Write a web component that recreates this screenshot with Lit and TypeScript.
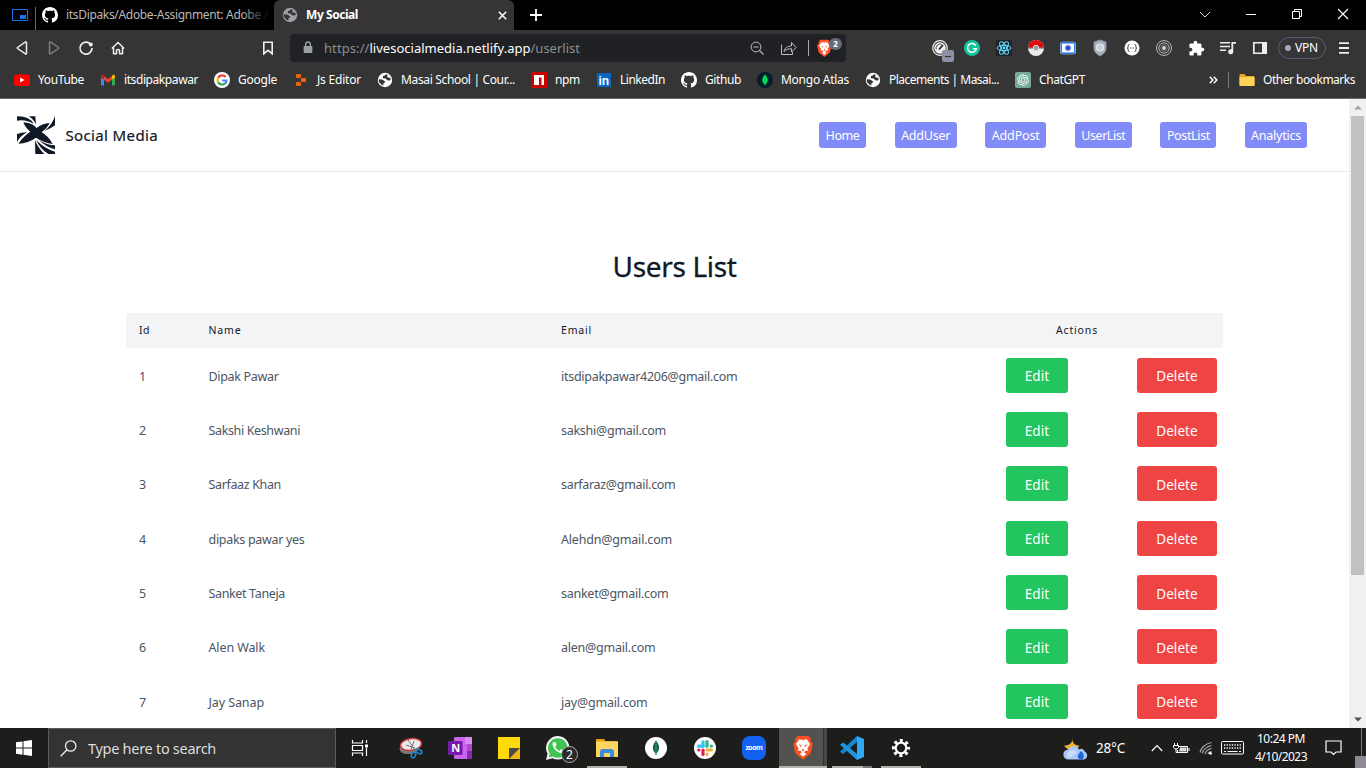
import { LitElement, html, css, svg, TemplateResult } from "lit";
import { customElement, property } from "lit/decorators.js";

const OCTO =
  "M8 0C3.58 0 0 3.58 0 8c0 3.54 2.29 6.53 5.47 7.59.4.07.55-.17.55-.38 0-.19-.01-.82-.01-1.49-2.01.37-2.53-.49-2.69-.94-.09-.23-.48-.94-.82-1.13-.28-.15-.68-.52-.01-.53.63-.01 1.08.58 1.23.82.72 1.21 1.87.87 2.33.66.07-.52.28-.87.51-1.07-1.78-.2-3.64-.89-3.64-3.95 0-.87.31-1.59.82-2.15-.08-.2-.36-1.02.08-2.12 0 0 .67-.21 2.2.82.64-.18 1.32-.27 2-.27.68 0 1.36.09 2 .27 1.53-1.04 2.2-.82 2.2-.82.44 1.1.16 1.92.08 2.12.51.56.82 1.27.82 2.15 0 3.07-1.87 3.75-3.65 3.95.29.25.54.73.54 1.48 0 1.07-.01 1.93-.01 2.2 0 .21.15.46.55.38A8.013 8.013 0 0016 8c0-4.42-3.58-8-8-8z";
const OPENAI =
  "M22.2819 9.8211a5.9847 5.9847 0 0 0-.5157-4.9108 6.0462 6.0462 0 0 0-6.5098-2.9A6.0651 6.0651 0 0 0 4.9807 4.1818a5.9847 5.9847 0 0 0-3.9977 2.9 6.0462 6.0462 0 0 0 .7427 7.0966 5.98 5.98 0 0 0 .511 4.9107 6.051 6.051 0 0 0 6.5146 2.9001A5.9847 5.9847 0 0 0 13.2599 24a6.0557 6.0557 0 0 0 5.7718-4.2058 5.9894 5.9894 0 0 0 3.9977-2.9001 6.0557 6.0557 0 0 0-.7475-7.0729zm-9.022 12.6081a4.4755 4.4755 0 0 1-2.8764-1.0408l.1419-.0804 4.7783-2.7582a.7948.7948 0 0 0 .3927-.6813v-6.7369l2.02 1.1686a.071.071 0 0 1 .038.052v5.5826a4.504 4.504 0 0 1-4.4945 4.4944zm-9.6607-4.1254a4.4708 4.4708 0 0 1-.5346-3.0137l.142.0852 4.783 2.7582a.7712.7712 0 0 0 .7806 0l5.8428-3.3685v2.3324a.0804.0804 0 0 1-.0332.0615L9.74 19.9502a4.4992 4.4992 0 0 1-6.1408-1.6464zM2.3408 7.8956a4.485 4.485 0 0 1 2.3655-1.9728V11.6a.7664.7664 0 0 0 .3879.6765l5.8144 3.3543-2.0201 1.1685a.0757.0757 0 0 1-.071 0l-4.8303-2.7865A4.504 4.504 0 0 1 2.3408 7.872zm16.5963 3.8558L13.1038 8.364 15.1192 7.2a.0757.0757 0 0 1 .071 0l4.8303 2.7913a4.4944 4.4944 0 0 1-.6765 8.1042v-5.6772a.79.79 0 0 0-.407-.667zm2.0107-3.0231l-.142-.0852-4.7735-2.7818a.7759.7759 0 0 0-.7854 0L9.409 9.2297V6.8974a.0662.0662 0 0 1 .0284-.0615l4.8303-2.7866a4.4992 4.4992 0 0 1 6.6802 4.66zM8.3065 12.863l-2.02-1.1638a.0804.0804 0 0 1-.038-.0567V6.0742a4.4992 4.4992 0 0 1 7.3757-3.4537l-.142.0805L8.704 5.459a.7948.7948 0 0 0-.3927.6813zm1.0976-2.3654l2.602-1.4998 2.6069 1.4998v2.9994l-2.5974 1.4997-2.6067-1.4997Z";

const icon = (w: number, h: number, vb: string, body: unknown) =>
  html`<svg width=${w} height=${h} viewBox=${vb} fill="none">${body}</svg>`;
const i16 = (body: unknown) => icon(16, 16, "0 0 16 16", body);
const i24 = (body: unknown) => icon(24, 24, "0 0 24 24", body);

const globe = (fg: string, bg: string) =>
  i16(svg`<circle cx="8" cy="8" r="7.2" fill=${fg}/>
    <path d="M1.700 7.200 5 7.400 8 9.300 7.600 11 6.200 11.600 6.500 13.400 4.600 12.800 2 10z" fill=${bg}/>
    <path d="M9 2.200 7.800 3.600 5.800 4.200 6 6.200 8.600 6.600 10.200 8.200 12.300 8.600 13.700 8 13.200 5.600 11.200 5.800 10 4.600 11 3.200z" fill=${bg}/>`);

const lion = (color: string, face: string) => svg`
  <path d="M7 1h10l2.500 3-.6 1.600L21 8l-1.500 7.500c-.3 1.200-1 2-2 2.800L12 22.800l-5.500-4.500c-1-.8-1.700-1.600-2-2.800L3 8l2.100-2.400L4.500 4z" fill=${color}/>
  <path d="M12 4.500 15.500 4 18.600 8.500 16 12.300 16.800 14.300 14 14.800 13 16 15 17.500 12 20 9 17.500 11 16 10 14.800 7.200 14.300 8 12.300 5.400 8.500 8.500 4z" fill=${face}/>
  <path d="M7.600 8.600 10.600 9.600 10.200 11.200zM16.400 8.600 13.400 9.600 13.800 11.200zM12 12l1 2.300-1 .7-1-.7z" fill=${color}/>`;

const bookmarks: { name: string; w: number; icon: TemplateResult }[] = [
  {
    name: "YouTube",
    w: 46,
    icon: i16(svg`<rect y="2.500" width="16" height="11.500" rx="2.800" fill="#f00"/><path d="M6.200 5.600v5l4.300-2.500z" fill="#fff"/>`),
  },
  {
    name: "itsdipakpawar",
    w: 74,
    icon: i16(svg`<path d="M1 4v9.500h3V7z" fill="#4285f4"/><path d="M15 4v9.500h-3V7z" fill="#34a853"/>
      <path d="M12 4.200v3.600l3-2.200V4.200c0-1.500-1.600-1.900-2.500-1.200z" fill="#fbbc04"/>
      <path d="M4 4.200v3.600L1 5.600V4.200C1 2.700 2.600 2.300 3.500 3z" fill="#c5221f"/>
      <path d="M4 4v3.700l4 3 4-3V4L8 7z" fill="#ea4335"/>`),
  },
  {
    name: "Google",
    w: 39,
    icon: i16(svg`<circle cx="8" cy="8" r="8" fill="#fff"/><g stroke-width="2.200">
      <path d="M11.600 5A4.500 4.500 0 0 0 4 6.100" stroke="#ea4335"/><path d="M4 6.100a4.500 4.500 0 0 0 0 4" stroke="#fbbc05"/>
      <path d="M4 10a4.500 4.500 0 0 0 7 1.400" stroke="#34a853"/><path d="M11 11.500a4.500 4.500 0 0 0 1.500-3H8.200" stroke="#4285f4"/></g>`),
  },
  {
    name: "Js Editor",
    w: 44,
    icon: i16(svg`<g fill="#f26207"><rect x="3" y="2" width="5" height="4" rx="1"/><rect x="8" y="6" width="5" height="4" rx="1"/><rect x="3" y="10" width="5" height="4" rx="1"/></g>`),
  },
  { name: "Masai School | Cour...", w: 114, icon: globe("#fff", "#333") },
  {
    name: "npm",
    w: 25,
    icon: i16(svg`<path d="M0 0h16v16H0z" fill="#cb0000"/><path d="M3 3h10v10h-2.500V5.500H8V13H3z" fill="#fff"/>`),
  },
  {
    name: "LinkedIn",
    w: 45,
    icon: i16(svg`<rect x="1" y="1" width="14" height="14" rx="1" fill="#0a66c2"/><text x="2.500" y="12.800" font-size="12" font-weight="700" font-family="Liberation Sans, sans-serif" fill="#fff">in</text>`),
  },
  { name: "Github", w: 36, icon: i16(svg`<path d=${OCTO} fill="#fff"/>`) },
  {
    name: "Mongo Atlas",
    w: 68,
    icon: i16(svg`<circle cx="8" cy="8" r="8" fill="#001e2b"/><path d="M8 2.500c3.600 3.600 3.200 7.500.4 9.800L8 14l-.4-1.700C4.800 10 4.400 6.100 8 2.500z" fill="#00ed64"/><path d="M8 3v10.500" stroke="#00a34a" stroke-width=".8"/>`),
  },
  { name: "Placements | Masai...", w: 110, icon: globe("#fff", "#333") },
  {
    name: "ChatGPT",
    w: 46,
    icon: icon(16, 16, "-4.500 -4.500 33 33", svg`<rect x="-4.500" y="-4.500" width="33" height="33" rx="4" fill="#75a99c"/><path d=${OPENAI} fill="#fff"/>`),
  },
];

const extensions: TemplateResult[] = [
  i24(svg`<circle cx="12" cy="12" r="7.300" fill="#333" stroke="#f2f2f2" stroke-width="1.200"/><circle cx="12" cy="12" r="5.800" fill="#f2f2f2"/><path d="M8.300 13.500a4 4 0 0 1 5.500-5" stroke="#555"/><path d="m11 13.500 4-4.500" stroke="#222" stroke-width="1.700"/>`),
  i24(svg`<circle cx="12" cy="12" r="8" fill="#15c39a"/><path d="M15.800 9.700A4.400 4.400 0 1 0 16.300 12.800H13" stroke="#fff" stroke-width="1.500"/>`),
  i24(svg`<path d="M4 4h16v16H4z" fill="#20232a"/><g stroke="#61dafb" stroke-width="1"><ellipse cx="12" cy="12" rx="7" ry="2.700"/><ellipse cx="12" cy="12" rx="7" ry="2.700" transform="rotate(60 12 12)"/><ellipse cx="12" cy="12" rx="7" ry="2.700" transform="rotate(120 12 12)"/></g><circle cx="12" cy="12" r="1.400" fill="#61dafb"/>`),
  i24(svg`<circle cx="12" cy="12" r="8" fill="#e8ebec"/><path d="M4 12a8 8 0 0 1 16 0z" fill="#df0a0a"/><path d="M4 12h16" stroke="#777" stroke-width="1.300"/><circle cx="12" cy="12" r="2.700" fill="#999" stroke="#ddd"/>`),
  i24(svg`<rect x="4.200" y="5.700" width="15.600" height="12.600" rx="2.500" fill="#fff"/><rect x="5.200" y="6.700" width="13.600" height="10.600" rx="1.500" fill="#fff" stroke="#1a73e8" stroke-width="1.400"/><circle cx="12" cy="12" r="3.400" fill="#aabcf5"/><circle cx="12" cy="12" r="2.300" fill="#2648d8"/>`),
  i24(svg`<path d="M12 4 18 6v6c0 4-3 6.500-6 8-3-1.500-6-4-6-8V6z" fill="#a9aebb" stroke="#858b99"/><circle cx="12" cy="11.500" r="3.500" fill="#c9ceda" stroke="#e5e8ee" stroke-width="1.200"/>`),
  i24(svg`<circle cx="12" cy="12" r="7.500" fill="#fff"/><path d="M9.500 8.500c-1.400 0-1.300.8-1.300 2 0 1-.2 1.500-1 1.500.8 0 1 .5 1 1.500 0 1.200-.1 2 1.300 2M14.500 8.500c1.400 0 1.300.8 1.300 2 0 1 .2 1.500 1 1.500-.8 0-1 .5-1 1.500 0 1.200.1 2-1.300 2" stroke="#333"/><path d="M9.800 12h4.500" stroke="#444" stroke-dasharray="1 .7"/>`),
  i24(svg`<g stroke="#b5b5b5"><circle cx="12" cy="12" r="7.500"/><circle cx="12" cy="12" r="5.200"/></g><circle cx="12" cy="12" r="3.300" stroke="#777"/><circle cx="12" cy="12" r="1.900" fill="#ddd"/>`),
  icon(17, 17, "0 0 24 24", svg`<path d="M20.500 11H19V7c0-1.100-.9-2-2-2h-4V3.500C13 2.120 11.880 1 10.500 1S8 2.120 8 3.500V5H4c-1.100 0-1.990.9-1.990 2v3.800H3.500c1.490 0 2.700 1.210 2.700 2.700s-1.210 2.700-2.700 2.700H2V20c0 1.100.9 2 2 2h3.800v-1.500c0-1.490 1.210-2.700 2.700-2.700 1.490 0 2.700 1.210 2.700 2.700V22H17c1.100 0 2-.9 2-2v-4h1.500c1.380 0 2.500-1.120 2.500-2.500S21.880 11 20.500 11z" fill="#fff"/>`),
  i24(svg`<path d="M4 6.800h10M4 10.500h10M4 14.200h6" stroke="#eee" stroke-width="1.600"/><path d="M16.300 16V6.800H20" stroke="#eee" stroke-width="1.800"/><circle cx="14.700" cy="15.700" r="2.500" fill="#eee"/>`),
  i24(svg`<path d="M5.800 6.800h12.400v10.400H5.800z" stroke="#eee" stroke-width="1.600"/><path d="M14 7h4.500v10H14z" fill="#eee"/>`),
];

const taskIcons: { icon: TemplateResult; state: string; badge?: string }[] = [
  {
    state: "first",
    icon: i24(svg`<g stroke="#fff" stroke-width="1.200"><path d="M4.500 4v3h10V4M4.500 20v-3h10v3M4.500 9.500h10v5h-10z"/><path d="M18.500 4v3M18.500 12v8"/></g><path d="M17 8.500h3v3h-3z" fill="#fff"/>`),
  },
  {
    state: "",
    icon: i24(svg`<ellipse cx="10.500" cy="12" rx="10" ry="6" fill="#777" transform="rotate(-8 10.500 12)"/><ellipse cx="12" cy="8.500" rx="10.500" ry="5.800" fill="#e9eaec" stroke="#d63c3c" stroke-width="1.400" transform="rotate(-8 12 8.500)"/><path d="m9 4 7 10M15 5l-3 9M7 9l9 3" stroke="#777"/><g stroke="#2580c3" stroke-width="1.700"><ellipse cx="14.500" cy="19" rx="2" ry="3" transform="rotate(20 14.500 19)"/><ellipse cx="20" cy="15.500" rx="3" ry="1.900" transform="rotate(25 20 15.500)"/></g>`),
  },
  {
    state: "",
    icon: i24(svg`<rect x="6" y="1" width="18" height="22" rx="1.300" fill="#ca64ea"/><path d="M17 1h7v7h-7z" fill="#d88bf0"/><path d="M19 8h5v7h-5z" fill="#ae4bd5"/><path d="M19 15h5v7c0 .6-.4 1-1 1h-4z" fill="#8428b5"/><rect y="5" width="14.500" height="14" rx="1" fill="#7719aa"/><text x="3.300" y="15.800" font-size="11" font-weight="700" font-family="Noto Sans, sans-serif" fill="#fff">N</text>`),
  },
  {
    state: "",
    icon: i24(svg`<path d="M1 1h22v11L12 23H1z" fill="#ffd90a"/><path d="M12 23V12h11z" fill="#494949"/><path d="M12 23 23 12v11z" fill="#efb613"/>`),
  },
  {
    state: "",
    badge: "2",
    icon: i24(svg`<path d="M0 24 1.600 17.700A11.700 11.700 0 1 1 6.500 22.300z" fill="#f5f5f5"/><path d="M2.800 21.200 3.800 17.500A9.700 9.700 0 1 1 7 20.400z" fill="#3fc351"/><path transform="translate(4.600 4.300) scale(.63)" d="M20 15.400c-1.200 0-2.400-.2-3.500-.6-.35-.1-.7 0-1 .3L13.900 17c-2.800-1.350-5.500-3.900-6.900-6.800L9 8.500c.3-.3.35-.7.25-1-.4-1.100-.6-2.300-.6-3.500 0-.6-.4-1-.9-1H4.200C3.600 3 3 3.200 3 4c0 9.300 7.700 17 17 17 .7 0 1-.6 1-1.200v-3.400c0-.6-.4-1-1-1z" fill="#fff"/>`),
  },
  {
    state: "open",
    icon: i24(svg`<path d="M1 3h8l1.500 2H22v6H1z" fill="#e5a00d"/><path d="M1 5.500h22V21H1z" fill="#fcd462"/><path d="M5 21v-5c0-2 1-3 2.500-3h9c1.500 0 2.500 1 2.500 3v5h-4v-4H9v4z" fill="#3a8ee0"/>`),
  },
  {
    state: "",
    icon: i24(svg`<circle cx="12" cy="12" r="11" fill="#fff"/><path d="M12 4.500c4 4.500 4 9.500.5 13L12 19.800l-.5-2.300c-3.500-3.500-3.500-8.500.5-13z" fill="#116149"/><path d="M12 5v14" stroke="#4a9c7b"/>`),
  },
  {
    state: "",
    icon: i24(svg`<circle cx="12" cy="12" r="11" fill="#fff"/><g stroke-width="3.200" stroke-linecap="round"><path d="M10 5.800v4.500" stroke="#36c5f0"/><path d="M5.500 10.200H10" stroke="#36c5f0"/><path d="M14 5.500v4.700" stroke="#2eb67d"/><path d="M18.300 10h.2" stroke="#2eb67d"/><path d="M14 14h4.500" stroke="#ecb22e"/><path d="M14 18.200v.2" stroke="#ecb22e"/><path d="M10 14v4.500" stroke="#e01e5a"/><path d="M5.700 14h.2" stroke="#e01e5a"/></g>`),
  },
  {
    state: "",
    icon: i24(svg`<rect width="24" height="24" rx="8" fill="#1261f3"/><text x="3.400" y="14.400" font-size="7" font-weight="700" textLength="17.500" font-family="Open Sans, sans-serif" fill="#fff">zoom</text>`),
  },
  { state: "active", icon: icon(26, 26, "0 0 24 24", lion("#fb5021", "#fff")) },
  {
    state: "open stacked",
    icon: i24(svg`<path d="M17 0v6L3.200 18 0 15.700z" fill="#1586d1"/><path d="M17 24v-6L3.200 6.500 0 8.700z" fill="#1d96df"/><path d="M17 0 24 3v18l-7 3z" fill="#30a9f2"/>`),
  },
  {
    state: "open",
    icon: i24(svg`<circle cx="12" cy="12" r="7.300" stroke="#fff" stroke-width="3.600" stroke-dasharray="2.870 2.870" stroke-dashoffset="1.430"/><circle cx="12" cy="12" r="5.300" stroke="#fff" stroke-width="2.200"/>`),
  },
];

const nav = [
  { name: "Home", w: 47, t: 34 },
  { name: "AddUser", w: 62, t: 49 },
  { name: "AddPost", w: 61, t: 48 },
  { name: "UserList", w: 57, t: 44 },
  { name: "PostList", w: 56, t: 43 },
  { name: "Analytics", w: 62, t: 50 },
];

const users = [
  { name: "Dipak Pawar", nw: 70, email: "itsdipakpawar4206@gmail.com", ew: 176.5 },
  { name: "Sakshi Keshwani", nw: 91.5, email: "sakshi@gmail.com", ew: 105 },
  { name: "Sarfaaz Khan", nw: 72.5, email: "sarfaraz@gmail.com", ew: 114.5 },
  { name: "dipaks pawar yes", nw: 96, email: "Alehdn@gmail.com", ew: 111 },
  { name: "Sanket Taneja", nw: 76.5, email: "sanket@gmail.com", ew: 107.5 },
  { name: "Alen Walk", nw: 56.5, email: "alen@gmail.com", ew: 94.5 },
  { name: "Jay Sanap", nw: 55.5, email: "jay@gmail.com", ew: 86.5 },
];

/** A single line of text whose tracking is adjusted to fill a given measure. */
@customElement("fit-text")
class FitText extends LitElement {
  @property({ type: Number }) measure = 0;
  @property() text = "";
  static styles = css`
    :host { display: block; flex: none; white-space: pre; }
    span { display: inline-block; }
  `;
  updated() {
    const span = this.renderRoot.querySelector("span") as HTMLElement;
    span.style.letterSpacing = "0px";
    const natural = span.getBoundingClientRect().width;
    span.style.letterSpacing = `${(this.measure - natural) / this.text.length}px`;
  }
  render() {
    return html`<span>${this.text}</span>`;
  }
}

const fit = (text: string, measure: number) =>
  html`<fit-text .text=${text} .measure=${measure}></fit-text>`;

@customElement("browser-chrome")
class BrowserChrome extends LitElement {
  static styles = css`
    :host { display: block; height: 98px; background: #353535; border-bottom: 1px solid #6a696b; color: #fff; font: 12px/16px "Noto Sans", sans-serif; }
    svg { display: block; flex: none; }
    .tabs { display: flex; height: 30px; background: #000; align-items: center; }
    .pip { margin-left: 11px; }
    .sep { width: 1px; height: 23px; margin: 7px 6px 0 6px; background: #666; }
    .bgtab { display: flex; align-items: center; gap: 8px; width: 232px; color: #b9b9b9; position: relative; }
    .bgtab::after { content: ""; position: absolute; right: 0; width: 32px; height: 20px; background: linear-gradient(90deg, transparent, #000 85%); }
    .tab { display: flex; align-items: center; box-sizing: border-box; width: 240px; height: 30px; padding: 0 7px 0 8px; gap: 8px; background: #353535; border-radius: 6px 6px 0 0; font-weight: 700; }
    .grow { flex: 1; }
    .plus { margin-left: 16px; }
    .controls { display: flex; gap: 22px; margin-right: 11px; align-items: center; }
    .bar { display: flex; align-items: center; height: 36px; }
    .left { display: flex; gap: 8px; margin-left: 10px; }
    .mark { margin-left: 126px; }
    .url { display: flex; align-items: center; box-sizing: border-box; width: 556px; height: 28px; margin-left: 10px; padding: 0 6px 0 10px; background: #202124; border-radius: 4px; font-size: 13px; color: #8d8f92; }
    .lock { margin-right: 8px; }
    .host { color: #fff; }
    .tools { display: flex; align-items: center; gap: 8px; }
    .rule { width: 1px; height: 16px; background: #aaa; margin: 0 -1px 0 -1px; }
    .shield { position: relative; display: flex; align-items: center; width: 24px; height: 24px; }
    .count { position: absolute; left: 13px; top: 2px; width: 13px; height: 12px; border-radius: 6px; background: #666b7b; color: #fff; font: 700 8px/12px "Noto Sans", sans-serif; text-align: center; }
    .ext { display: flex; gap: 8px; margin-left: 82px; }
    .slot { position: relative; display: grid; place-items: center; width: 24px; height: 24px; }
    .tag { position: absolute; left: 14px; top: 14px; width: 12px; height: 12px; border-radius: 2px; background: #8e90a6; color: #222; font: 700 9px/12px "Noto Sans", sans-serif; text-align: center; }
    .vpn { display: flex; align-items: center; box-sizing: border-box; width: 48px; height: 22px; margin: 0 6px; padding-left: 6px; gap: 4px; border: 1px solid #5d5a75; border-radius: 11px; }
    .dot { width: 6px; height: 6px; border-radius: 3px; background: #a4a8b8; }
    .marks { display: flex; align-items: center; height: 28px; gap: 16px; padding: 0 11px 0 14px; }
    .item { display: flex; align-items: center; gap: 8px; }
    .side { display: flex; align-items: center; gap: 10px; }
    .vrule { width: 1px; height: 16px; background: #777; }
  `;
  render() {
    return html`
      <div class="tabs">
        <div class="pip">${icon(18, 14, "0 0 18 14", svg`<path d="M1.500 1.500h15v11h-15z" stroke="#1a73e8"/><path d="M9 7h6v4H9z" fill="#1a73e8"/>`)}</div>
        <div class="sep"></div>
        <div class="bgtab">${i16(svg`<path d=${OCTO} fill="#fff"/>`)}${fit("itsDipaks/Adobe-Assignment: Adobe A", 205)}</div>
        <div class="tab">${globe("#9aa0a6", "#353535")}${fit("My Social", 52)}<span class="grow"></span>
          ${icon(9, 9, "0 0 9 9", svg`<path d="m.8.8 7.400 7.400M8.200.8.8 8.200" stroke="#fff" stroke-width="1.500"/>`)}</div>
        <div class="plus">${icon(12, 12, "0 0 12 12", svg`<path d="M6 0v12M0 6h12" stroke="#fff" stroke-width="1.800"/>`)}</div>
        <span class="grow"></span>
        <div class="controls">
          ${i24(svg`<path d="m7 9 5 5 5-5" stroke="#ddd"/>`)}
          ${i24(svg`<path d="M7 11.500h10" stroke="#fff"/>`)}
          ${i24(svg`<path d="M7.500 8.500h7v7h-7zM9.500 8.500v-2h7v7h-2" stroke="#fff"/>`)}
          ${i24(svg`<path d="m7 6 10 10M17 6 7 16" stroke="#fff" stroke-width="1.100"/>`)}
        </div>
      </div>
      <div class="bar">
        <div class="left">
          ${i24(svg`<path d="M16.500 6.500v11q-.2.800-1 .4L7.500 12.500q-.6-.5 0-1L15.500 6q.8-.3 1 .5z" stroke="#eee" stroke-width="1.500"/>`)}
          ${i24(svg`<path d="M7.500 6.500v11q.2.800 1 .4l8-5.400q.6-.5 0-1L8.500 6q-.8-.3-1 .5z" stroke="#808080" stroke-width="1.500"/>`)}
          ${i24(svg`<path d="M16.500 8.200A6 6 0 1 0 18 12" stroke="#eee" stroke-width="1.700"/><circle cx="16.800" cy="8.600" r="2" fill="#eee"/>`)}
          ${i24(svg`<path d="m5.800 12.500 6.200-6 6.200 6M7.500 11.500v6.200h3v-3.200q0-1 1.500-1t1.500 1v3.200h3v-6.200" stroke="#eee" stroke-width="1.500" stroke-linejoin="round"/>`)}
        </div>
        <div class="mark">${i24(svg`<path d="M7.800 6.200h8.400v11.500L12 14.300l-4.200 3.400z" stroke="#eee" stroke-width="1.600"/>`)}</div>
        <div class="url">
          <div class="lock">${icon(16, 16, "0 0 24 24", svg`<path d="M17 9h-.5V6.500a4.500 4.500 0 0 0-9 0V9H7c-1 0-1.500.7-1.500 1.500V18c0 1 .7 1.500 1.500 1.500h10c1 0 1.500-.7 1.500-1.500v-7.500c0-.8-.6-1.500-1.500-1.500zM9.500 6.500a2.500 2.500 0 0 1 5 0V9h-5z" fill="#9aa0a6"/>`)}</div>
          ${fit("https://", 45.5)}<span class="host">${fit("livesocialmedia.netlify.app", 161)}</span>${fit("/userlist", 49.5)}
          <span class="grow"></span>
          <div class="tools">
            ${i24(svg`<circle cx="11" cy="11" r="4.900" stroke="#bbb"/><path d="m14.500 14.500 4 4M8.500 11h5" stroke="#bbb" stroke-width="1.200"/>`)}
            ${i24(svg`<path d="M4.500 8.500v10h11V16M7 15.500c.5-3.500 3.500-5.500 7.500-5.500V6.500l4.500 5-4.500 4.500V12.700c-3.500 0-6 1-7.500 2.800z" stroke="#bbb"/>`)}
            <div class="rule"></div>
            <div class="shield">${icon(19, 19, "1.500 0 24 24", lion("#fb542b", "#fff"))}<span class="count">2</span></div>
          </div>
        </div>
        <div class="ext">${extensions.map((e, i) => html`<div class="slot">${e}${i === 0 ? html`<span class="tag">--</span>` : ""}</div>`)}</div>
        <div class="vpn"><span class="dot"></span>${fit("VPN", 23)}</div>
        ${i24(svg`<path d="M7 7.200h10M7 12h10M7 16.800h10" stroke="#eee" stroke-width="1.800"/>`)}
      </div>
      <div class="marks">
        ${bookmarks.map((b) => html`<div class="item">${b.icon}${fit(b.name, b.w)}</div>`)}
        <span class="grow"></span>
        <div class="side">${icon(9, 8, "0 0 9 8", svg`<path d="m.8.8 3 3.200-3 3.200M4.800.8l3 3.200-3 3.200" stroke="#fff" stroke-width="1.500"/>`)}
          <div class="vrule"></div>
          <div class="item">${i16(svg`<path d="M.5 3q0-1 1-1h4L7 4h7.500q1 0 1 1v8.500h-15z" fill="#e8a81e"/><path d="M.5 5h14q1 0 1 1v7q0 1-1 1h-13q-1 0-1-1z" fill="#ffd25a"/>`)}${fit("Other bookmarks", 92)}</div>
        </div>
      </div>`;
  }
}

@customElement("users-page")
class UsersPage extends LitElement {
  static styles = css`
    :host { display: flex; height: 629px; overflow: hidden; background: #fff; font-family: "Noto Sans", sans-serif; color: #111827; }
    .page { width: 1349px; }
    header { display: flex; align-items: center; height: 72px; box-sizing: content-box; border-bottom: 1px solid #e5e7eb; padding: 0 42px 0 17px; width: 1290px; }
    svg { display: block; flex: none; }
    .brand { margin-left: 10.5px; font-size: 15px; line-height: 24px; -webkit-text-stroke: .2px #111827; }
    nav { display: flex; gap: 28.600px; margin-left: auto; }
    .link { display: grid; place-items: center; box-sizing: border-box; height: 26px; padding-top: 2px; border-radius: 3px; background: #818cf8; color: #fff; font-size: 12.5px; line-height: 18px; }
    h1 { display: grid; place-items: center; margin: 74px 0 27px; font-size: 28px; line-height: 40px; font-weight: 400; -webkit-text-stroke: .3px #111827; }
    .table { width: 1097px; margin: 0 auto; }
    .row { display: grid; grid-template-columns: 69.5px 352.5px 445px 131px 1fr; height: 54.35px; padding-left: 13px; align-items: center; font-size: 12.5px; line-height: 18px; color: #4b5563; }
    .cell { padding-top: 3px; }
    .headbar { background: #f3f4f6; border-radius: 3px 0 0 0; height: 35px; }
    .headbar .row { height: 34px; font-size: 10.5px; color: #111827; }
    .headbar .cell { padding-top: 0; }
    .act { padding-left: 50px; }
    .btn { display: grid; place-items: center; height: 35px; border-radius: 3px; color: #fff; font-size: 13.5px; padding-top: 2px; box-sizing: border-box; }
    .edit { width: 62px; background: #22c55e; }
    .del { width: 80px; background: #ef4444; }
    .scroll { display: flex; flex-direction: column; align-items: center; width: 17px; background: #f1f1f1; }
    .arrow { display: grid; place-items: center; height: 17px; }
    .thumb { width: 13px; height: 459px; background: #c1c1c1; }
    .space { flex: 1; }
  `;
  render() {
    return html`
      <div class="page">
        <header>
          ${icon(38, 38, "0 0 114 114", svg`<g fill="#111827">
            <path d="M19 19Q44 20 59 36Q75 22 98 21Q90 38 74 49Q94 60 107 84Q80 80 57 65Q34 82 4 83Q20 60 40 47Q25 36 19 19z"/>
            <path d="M0 1Q38 0 50 24Q28 10 0 14z"/><path d="M36 1H55L57 27Q52 12 36 1z"/>
            <path d="M114 0V28Q102 38 82 45Q106 26 114 0z"/>
            <path d="M0 54Q12 50 30 49Q10 60 0 78z"/><path d="M54 72Q62 94 82 114H55z"/>
            <path d="M58 72Q82 98 114 107V114H94Q68 98 58 72z"/><path d="M66 72Q90 88 114 88V100Q88 94 66 72z"/></g>`)}
          <div class="brand">${fit("Social Media", 92.5)}</div>
          <nav>${nav.map((n) => html`<div class="link" style="width:${n.w}px">${fit(n.name, n.t)}</div>`)}</nav>
        </header>
        <h1>${fit("Users List", 124)}</h1>
        <div class="table">
          <div class="headbar"><div class="row">
            <div class="cell">${fit("Id", 11)}</div><div class="cell">${fit("Name", 33)}</div><div class="cell">${fit("Email", 31)}</div><div class="act">${fit("Actions", 42)}</div>
          </div></div>
          ${users.map(
            (u, i) => html`<div class="row">
              <div class="cell">${i + 1}</div>
              <div class="cell">${fit(u.name, u.nw)}</div>
              <div class="cell">${fit(u.email, u.ew)}</div>
              <div class="btn edit">${fit("Edit", 24.5)}</div>
              <div class="btn del">${fit("Delete", 41.5)}</div>
            </div>`
          )}
        </div>
      </div>
      <div class="scroll">
        <div class="arrow">${icon(8, 5, "0 0 8 5", svg`<path d="M0 4.500h8L4 .5z" fill="#a3a3a3"/>`)}</div>
        <div class="thumb"></div>
        <div class="space"></div>
        <div class="arrow">${icon(8, 5, "0 0 8 5", svg`<path d="M0 .5h8l-4 4z" fill="#505050"/>`)}</div>
      </div>`;
  }
}

@customElement("task-bar")
class TaskBar extends LitElement {
  static styles = css`
    :host { display: flex; height: 40px; background: #1d1d1c; color: #fff; font: 12px/18px "Noto Sans", sans-serif; align-items: center; position: relative; }
    svg { display: block; flex: none; }
    .start { display: grid; place-items: center; width: 48px; }
    .search { display: flex; align-items: center; box-sizing: border-box; width: 288px; height: 40px; border: 1px solid #5c5c5c; background: #333; padding-left: 11px; gap: 11px; font-size: 14.5px; line-height: 20px; color: #ddd; }
    .apps { display: flex; }
    .app { position: relative; display: grid; place-items: center; box-sizing: border-box; width: 49px; height: 40px; padding-right: 2px; }
    .first { width: 51px; padding-right: 3px; }
    .open::after { content: ""; position: absolute; bottom: 0; left: 4px; width: 40px; height: 2px; background: #b5b2ae; }
    .stacked::after { background: linear-gradient(90deg, #b5b2ae 31px, #77777a 31px); }
    .active { background: linear-gradient(90deg, #525250 44px, #333 44px, #333 45px, #484846 45px, #484846 48px, transparent 48px); }
    .active::after { content: ""; position: absolute; bottom: 0; left: 0; width: 48px; height: 2px; background: #b5b2ae; }
    .badge { position: absolute; left: 27px; top: 18px; width: 15px; height: 15px; border: 1px solid #aaa; border-radius: 9px; background: #2a2a2a; font-size: 12px; line-height: 15px; text-align: center; }
    .tray { display: flex; align-items: center; margin-left: auto; }
    .temp { margin-left: 8px; font-size: 13.5px; }
    .caret { margin-left: 26px; }
    .power { margin-left: 10px; }
    .wifi { margin-left: 9px; }
    .keys { margin-left: 8px; }
    .clock { width: 62px; margin-left: 6px; display: grid; justify-items: center; }
    .note { margin-left: 13px; margin-right: 24px; }
    .corner { position: absolute; right: 0; bottom: 0; width: 11px; height: 12px; background: #8e8995; }
    .edge { position: absolute; right: 4px; top: 0; width: 1px; height: 28px; background: #777; }
  `;
  render() {
    return html`
      <div class="start">${i16(svg`<path d="M0 2.300 6.500 1.400v6.200H0zM7.500 1.200 16 0v7.600H7.500zM0 8.500h6.500v6.200L0 13.800zM7.500 8.500H16V16l-8.500-1.200z" fill="#fff"/>`)}</div>
      <div class="search">${icon(17, 17, "0 0 17 17", svg`<circle cx="10.700" cy="6" r="5.200" stroke="#eee" stroke-width="1.300"/><path d="m7 9.800-6.300 6.500" stroke="#eee" stroke-width="1.300"/>`)}${fit("Type here to search", 128)}</div>
      <div class="apps">${taskIcons.map((a) => html`<div class="app ${a.state}">${a.icon}${a.badge ? html`<span class="badge">${a.badge}</span>` : ""}</div>`)}</div>
      <div class="tray">
        ${icon(25, 25, "0 0 25 25", svg`<path d="M9.500 1c-1 5 2 9 7 8.500-2 4-7 6-10.500 4C3 12 1 10.500 1.500 9.500 7 10 10 6 9.500 1z" fill="#f5b02e"/><path d="M5.500 23.500a5 5 0 0 1-.3-10C7 9 14 8.500 16 13.500c2-1.500 5-.5 5.500 2 4 1.500 3.500 8-1.500 8z" fill="#a9c8f5"/><path d="M6 22.500a4 4 0 0 1 0-7c2-2 6-2 8 1z" fill="#c8dcfa"/><path d="M18 15c4 3 3.500 8 0 8.500-4-.5-4.500-4 0-8.500z" fill="#2262d6"/>`)}
        <div class="temp">${fit("28°C", 29)}</div>
        <div class="caret">${icon(12, 8, "0 0 12 8", svg`<path d="m.8 7 5.200-5.500L11.200 7" stroke="#fff" stroke-width="1.200"/>`)}</div>
        <div class="power">${icon(17, 13, "0 0 17 13", svg`<path d="M6 4.500h8.500v6h-10V8M16 6v3M1.500 1v2M4.500 1v2M.5 3.500h5v1.800Q5 7 3 7T.5 5.300zM3 7v3.500h1.500" stroke="#fff"/><path d="M7 5.500h6.500v4H6z" fill="#ddd"/>`)}</div>
        <div class="wifi">${icon(14, 14, "0 0 14 14", svg`<g stroke="#aaa" stroke-width="1.200"><path d="M1 11.500Q3 3.500 12.500 1.500"/><path d="M3.500 12.500Q4.500 6.500 12.500 4.500"/><path d="M6.200 13Q7 8.500 12.500 7.500"/><path d="M9 13Q9.500 10.800 12.500 10.500"/></g><circle cx="11.500" cy="12.300" r="1.400" fill="#fff"/>`)}</div>
        <div class="keys">${icon(23, 14, "0 0 23 14", svg`<rect x=".5" y=".5" width="22" height="12.500" rx="1" stroke="#fff"/><path d="M3 4h17M3 7h17" stroke="#fff" stroke-width="1.300" stroke-dasharray="1.300 1.300"/><path d="M3 10.500h2M6.500 10.500h10M18 10.500h2" stroke="#fff"/>`)}</div>
        <div class="clock">${fit("10:24 PM", 48)}${fit("4/10/2023", 52)}</div>
        <div class="note">${icon(17, 16, "0 0 17 16", svg`<path d="M1 1h15v11h-5l-2.500 2.500L6 12H1z" stroke="#fff" stroke-width="1.200"/>`)}</div>
      </div>
      <div class="edge"></div><div class="corner"></div>`;
  }
}

@customElement("app-root")
class AppRoot extends LitElement {
  static styles = css`
    :host { display: block; width: 1366px; height: 768px; overflow: hidden; background: #fff; }
  `;
  render() {
    return html`<browser-chrome></browser-chrome><users-page></users-page><task-bar></task-bar>`;
  }
}
